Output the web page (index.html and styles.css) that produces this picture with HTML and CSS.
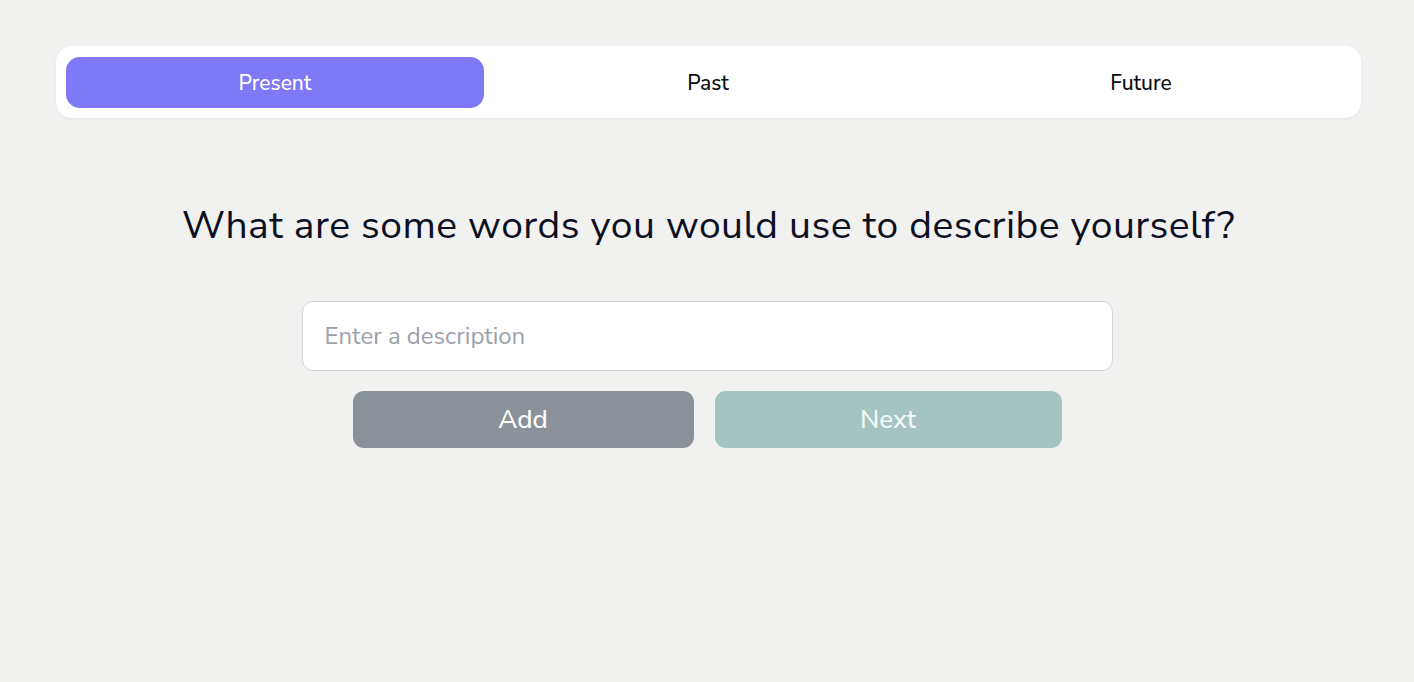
FILE: index.html
```html
<!DOCTYPE html>
<html lang="en">
<head>
<meta charset="utf-8">
<title>Describe yourself</title>
<link rel="stylesheet" href="styles.css">
</head>
<body>
<div class="page">
  <nav class="tabs">
    <button class="tab active">Present</button>
    <button class="tab">Past</button>
    <button class="tab">Future</button>
  </nav>
  <main class="content">
    <h1 class="question">What are some words you would use to describe yourself?</h1>
    <input class="field" type="text" placeholder="Enter a description">
    <div class="actions">
      <button class="btn btn-add">Add</button>
      <button class="btn btn-next">Next</button>
    </div>
  </main>
</div>
</body>
</html>
```
FILE: styles.css
```css
* { box-sizing: border-box; }
html, body { margin: 0; padding: 0; background: #f1f1ef; }
body { font-family: "Nunito Sans", Lato, "Noto Sans", sans-serif; }
.page { padding: 46px 0 0 56px; width: 1414px; height: 682px; }
.tabs {
  width: 1305px;
  height: 72px;
  background: #ffffff;
  border-radius: 16px;
  box-shadow: 0 1px 3px rgba(0,0,0,0.06);
  padding: 11px 11px 10px 10px;
  display: grid;
  grid-template-columns: 1fr 1fr 1fr;
  column-gap: 15px;
}
.tab {
  border: none;
  background: transparent;
  border-radius: 14px;
  font-family: inherit;
  font-size: 21px;
  font-weight: 500;
  color: #0b0b0f;
  padding: 0;
  cursor: pointer;
}
.tab.active { background: #7f78f7; color: #ffffff; }
.content {
  width: 1305px;
  display: flex;
  flex-direction: column;
  align-items: center;
}
.question {
  margin: 84px 0 0 0;
  font-size: 39px;
  font-weight: 400;
  color: #0c1022;
  line-height: 48px;
  letter-spacing: 0.5px;
}
.field {
  margin: 51px 0 0 -3px;
  width: 811px;
  height: 70px;
  border: 1px solid #d5d6db;
  border-radius: 11px;
  background: #ffffff;
  padding: 0 22px;
  font-family: inherit;
  font-size: 24px;
  color: #111;
  outline: none;
}
.field::placeholder { color: #9ba1ab; }
.actions {
  margin: 20px 0 0 -3px;
  display: flex;
  gap: 21px;
}
.btn {
  height: 57px;
  border: none;
  border-radius: 11px;
  font-family: inherit;
  font-size: 26px;
  font-weight: 500;
  color: #ffffff;
  cursor: pointer;
}
.btn-add { width: 341px; background: #8a9198; }
.btn-next { width: 347px; background: #a4c4c1; color: #f4f9f8; }
```
